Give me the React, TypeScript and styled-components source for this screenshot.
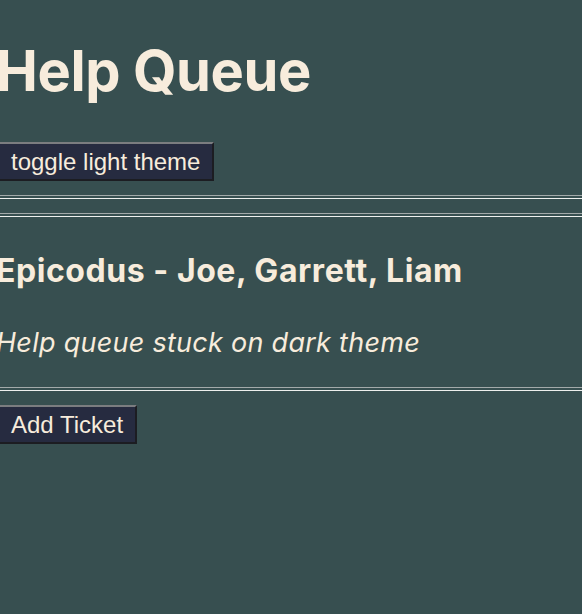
import React from "react";
import styled, { createGlobalStyle } from "styled-components";

const Global = createGlobalStyle`
  html, body {
    margin: 0;
    padding: 0;
    background: #374f50;
    overflow: hidden;
  }
`;

const Page = styled.div`
  display: flex;
  flex-direction: column;
  align-items: flex-start;
  margin-left: -4px;
  padding-top: 37px;
  width: calc(100% + 4px);
  color: #f7ecdc;
  font-family: Inter, "Noto Sans", sans-serif;
`;

const Title = styled.h1`
  margin: 0;
  font-size: 56px;
  font-weight: 700;
  line-height: 68px;
  letter-spacing: -0.4px;
`;

const Button = styled.button<{ $top: number }>`
  margin: ${(p) => p.$top}px 0 14px 0;
  font-family: "Liberation Sans", Arial, sans-serif;
  font-size: 24px;
  line-height: 27px;
  padding: 4px 12px 4px 13px;
  color: #f7ecdc;
  background: #262b40;
  border: 2px solid;
  border-color: #7b7d80 #1c1d22 #1c1d22 #7b7d80;
  cursor: pointer;
`;

const Rule = styled.hr<{ $bottom: number }>`
  align-self: stretch;
  margin: 0 0 ${(p) => p.$bottom}px 0;
  height: 2px;
  border: none;
  border-top: 1px solid #a3aaaa;
  border-bottom: 1px solid #eef0ee;
`;

const Ticket = styled.div`
  display: flex;
  flex-direction: column;
  align-self: stretch;
`;

const Names = styled.h2`
  margin: 0 0 36px 0;
  font-size: 32px;
  font-weight: 700;
  line-height: 38px;
  letter-spacing: 0.55px;
`;

const Issue = styled.p`
  margin: 0 0 28px 0;
  font-size: 27px;
  font-style: italic;
  line-height: 33px;
  letter-spacing: 0.27px;
`;

export default function App() {
  return (
    <>
      <Global />
      <Page>
        <Title>Help Queue</Title>
        <Button $top={37}>toggle light theme</Button>
        <Rule $bottom={14} />
        <Rule $bottom={35} />
        <Ticket>
          <Names>Epicodus - Joe, Garrett, Liam</Names>
          <Issue>Help queue stuck on dark theme</Issue>
          <Rule $bottom={0} />
        </Ticket>
        <Button $top={14}>Add Ticket</Button>
      </Page>
    </>
  );
}
